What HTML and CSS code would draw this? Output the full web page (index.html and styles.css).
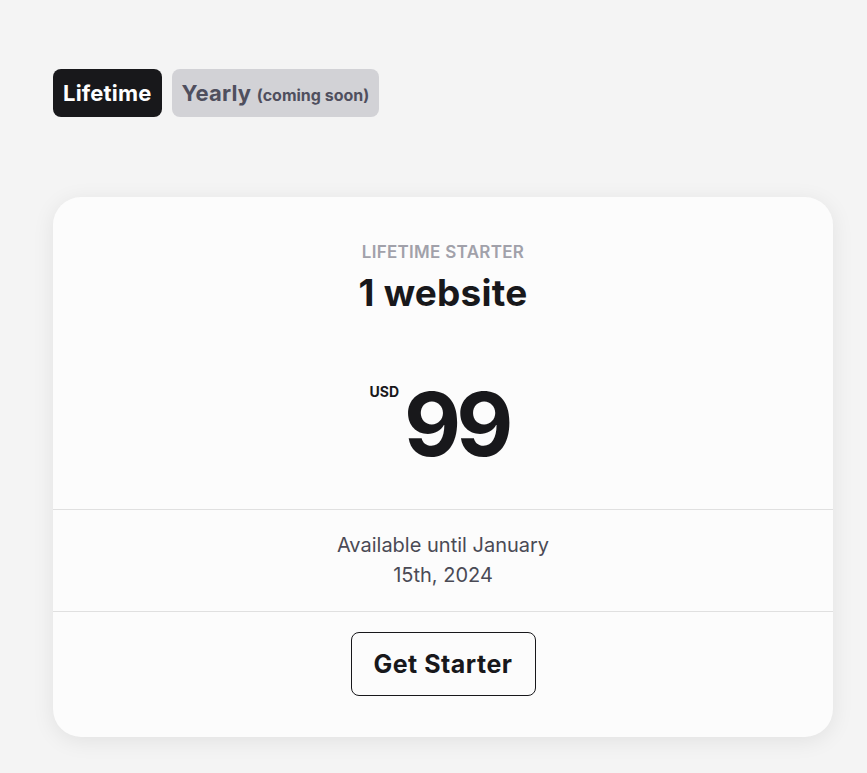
FILE: index.html
```html
<!DOCTYPE html>
<html lang="en">
<head>
    <meta charset="UTF-8">
    <meta name="viewport" content="width=device-width, initial-scale=1.0">
    <title>Pricing</title>
    <link rel="stylesheet" href="styles.css">
</head>
<body>
    <div class="page">
        <div class="tabs">
            <button class="tab tab-active">Lifetime</button>
            <button class="tab tab-disabled">Yearly <small>(coming soon)</small></button>
        </div>

        <div class="card">
            <div class="card-head">
                <div class="plan-label">LIFETIME STARTER</div>
                <h2 class="plan-title">1 website</h2>
                <div class="price">
                    <span class="currency">USD</span>
                    <span class="amount">99</span>
                </div>
            </div>
            <div class="card-note">
                Available until January<br>
                15th, 2024
            </div>
            <div class="card-foot">
                <button class="btn-buy">Get Starter</button>
            </div>
        </div>
    </div>
</body>
</html>
```

FILE: styles.css
```css
body {
    margin: 0;
    background-color: #f4f4f4;
    font-family: Inter, "Noto Sans", sans-serif;
    color: #18181b;
}
.page {
    padding: 69px 34px 36px 53px;
}
.tabs {
    display: flex;
    gap: 10px;
}
.tab {
    height: 48px;
    padding: 0 10px;
    border: none;
    border-radius: 8px;
    font-family: inherit;
    font-size: 22px;
    font-weight: 700;
    letter-spacing: 0.2px;
}
.tab-active {
    background-color: #18181b;
    color: #ffffff;
}
.tab-disabled {
    background-color: #d2d2d6;
    color: #4f4f5e;
}
.tab small {
    font-size: 16px;
    letter-spacing: 0;
}
.card {
    margin-top: 80px;
    width: 780px;
    background-color: #fcfcfc;
    border-radius: 28px;
    box-shadow: 0 4px 22px rgba(0, 0, 0, 0.08);
    text-align: center;
}
.card-head {
    padding: 43px 0 39px;
}
.plan-label {
    font-size: 17px;
    line-height: 24px;
    font-weight: 600;
    letter-spacing: 0.3px;
    color: #a1a1aa;
}
.plan-title {
    margin: 7px 0 0;
    font-size: 37px;
    line-height: 44px;
    font-weight: 700;
    letter-spacing: 0.2px;
}
.price {
    display: flex;
    justify-content: center;
    margin-top: 63px;
}
.currency {
    font-size: 14px;
    font-weight: 700;
    margin-top: 5px;
    margin-right: 5px;
}
.amount {
    padding-right: 8px;
    font-size: 88px;
    line-height: 92px;
    font-weight: 700;
    letter-spacing: -5px;
}
.card-note {
    padding: 20px 0 21px;
    border-top: 1px solid #e0e0e0;
    border-bottom: 1px solid #e0e0e0;
    font-size: 20px;
    line-height: 30px;
    color: #4a4a55;
}
.card-foot {
    padding: 20px 0 41px;
}
.btn-buy {
    width: 185px;
    height: 64px;
    background-color: transparent;
    border: 1px solid #18181b;
    border-radius: 8px;
    font-family: inherit;
    font-size: 25px;
    font-weight: 700;
    letter-spacing: 0.5px;
    color: #18181b;
    cursor: pointer;
}
```
